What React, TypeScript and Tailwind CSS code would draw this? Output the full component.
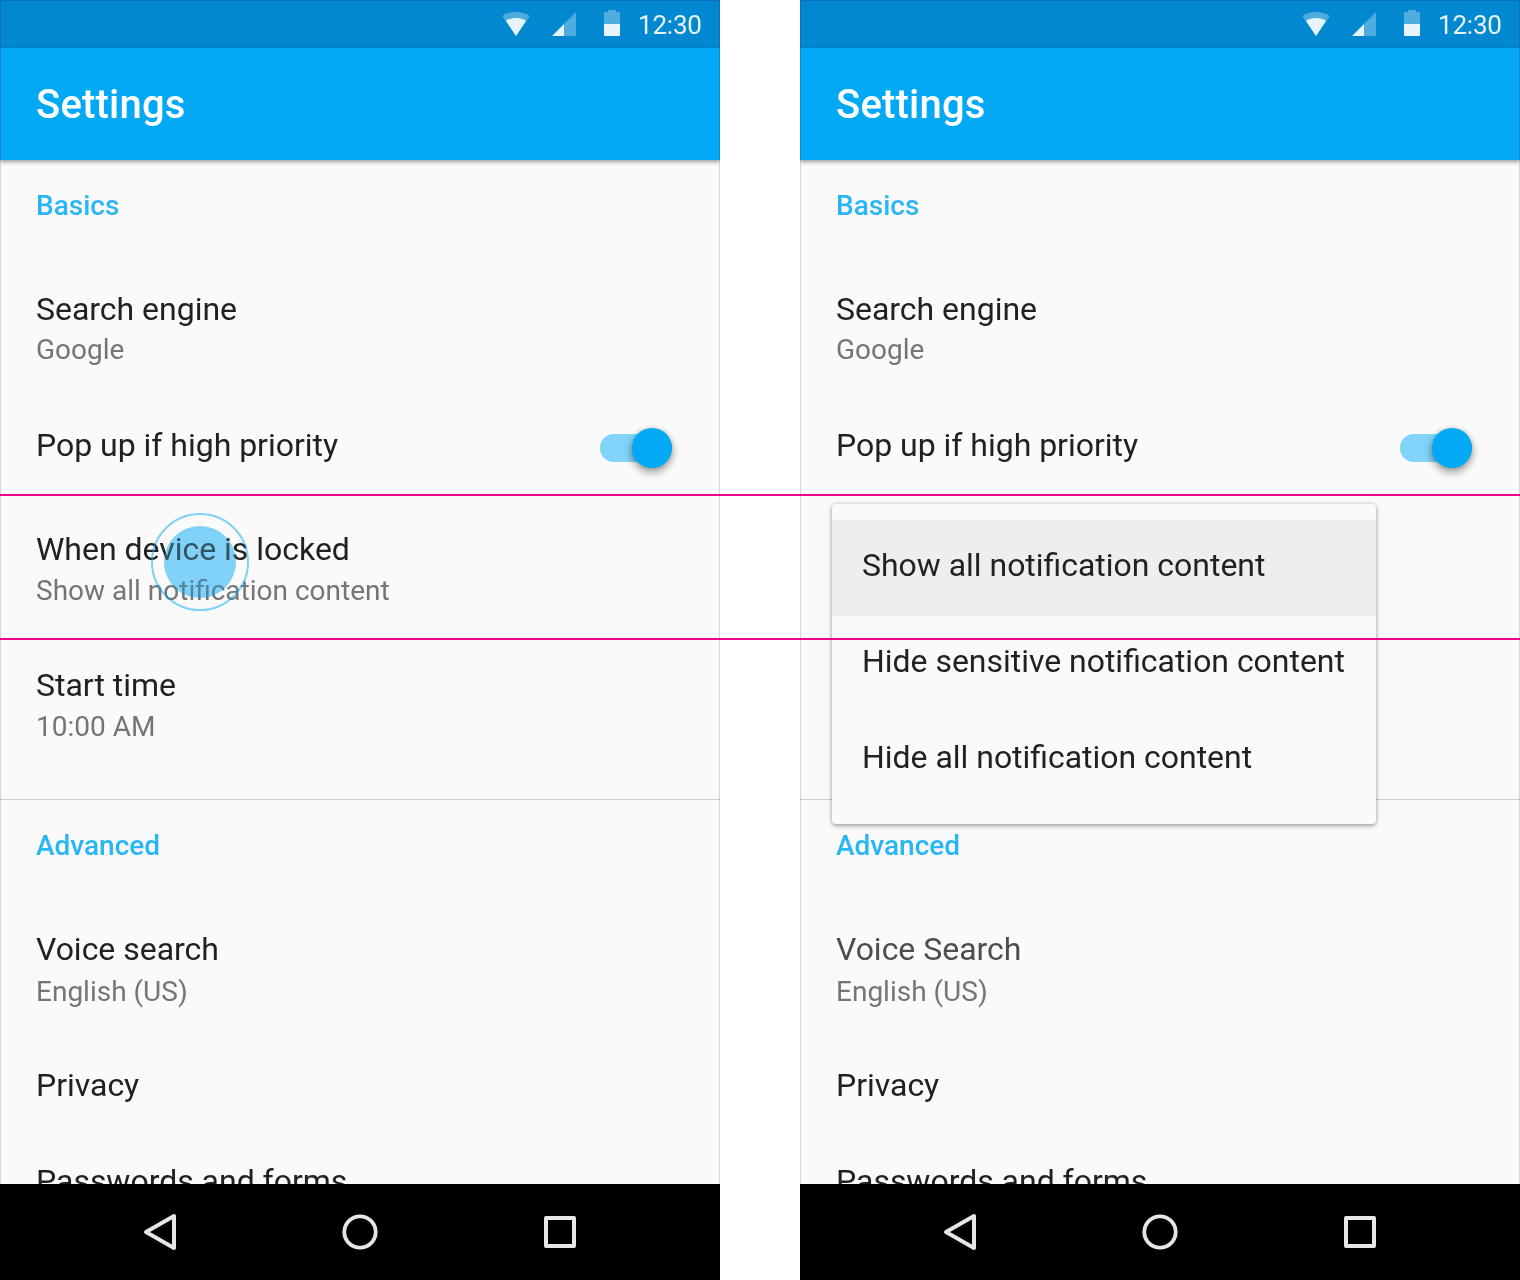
import type { ReactNode } from "react";

function StatusBar() {
  return (
    <div className="flex h-12 shrink-0 items-center bg-[#0288d1] pl-[502px]">
      <svg className="h-12 w-[118px] shrink-0" viewBox="502 0 118 48">
        <path d="M502.2 15.9C506 13.3 510.800 12 516 12s10 1.300 13.800 3.900L516 36z" fill="#fff" fillOpacity=".3" />
        <path d="M505.800 20.800C508.500 18.900 512 17.900 516 17.900s7.500 1 10.200 2.900L516 36z" fill="#fff" fillOpacity=".86" />
        <path d="M576 12v24h-12V24z" fill="#fff" fillOpacity=".3" />
        <path d="M564 24v12h-12z" fill="#fff" fillOpacity=".9" />
        <path d="M608 10h8v2h3q1 0 1 1v11h-16V13q0-1 1-1h3z" fill="#fff" fillOpacity=".3" />
        <path d="M604 24h16v11q0 1-1 1h-14q-1 0-1-1z" fill="#fff" fillOpacity=".9" />
      </svg>
      <span className="ml-[18px] mt-[2px] text-[26px] leading-8 tracking-[-0.2px] text-white/90">12:30</span>
    </div>
  );
}

function NavBar() {
  return (
    <div className="flex h-24 shrink-0 items-center justify-center gap-[152px] bg-black">
      <svg className="size-12" viewBox="0 0 48 48" fill="none" stroke="#e6e6e6" strokeWidth="4" strokeLinejoin="round">
        <path d="M38 8v32L10 24z" />
      </svg>
      <svg className="size-12" viewBox="0 0 48 48" fill="none" stroke="#e6e6e6" strokeWidth="3.8">
        <circle cx="24" cy="24" r="15.7" />
      </svg>
      <svg className="size-12" viewBox="0 0 48 48" fill="none" stroke="#e6e6e6" strokeWidth="4" strokeLinejoin="round">
        <path d="M10 10h28v28H10z" />
      </svg>
    </div>
  );
}

function SectionTitle({ children }: { children: ReactNode }) {
  return <h2 className="h-24 shrink-0 pt-[26px] text-[28px] font-medium leading-10 text-[#29b6f6]">{children}</h2>;
}

type RowProps = { title?: string; value?: string; className?: string; titleClass?: string; valueClass?: string };

function Row({ title, value, className = "", titleClass = "text-[#212121]", valueClass = "pt-[2px]" }: RowProps) {
  return (
    <div className={`shrink-0 ${className}`}>
      {title && <div className={`text-[32px] leading-10 tracking-[-0.02px] ${titleClass}`}>{title}</div>}
      {value && <div className={`text-[28px] leading-10 text-[#757575] ${valueClass}`}>{value}</div>}
    </div>
  );
}

function Switch() {
  return (
    <div className="mr-3 mt-[3px] flex h-10 w-[72px] items-center">
      <div className="flex h-7 w-full items-center justify-end rounded-full bg-[#80d3f9]">
        <div className="size-10 shrink-0 rounded-full bg-[#03a9f4] shadow-[0_4px_8px_rgba(0,0,0,0.4),0_0_4px_rgba(0,0,0,0.12)]" />
      </div>
    </div>
  );
}

type PhoneProps = { menuOpen?: boolean; voiceTitle: string; voiceClass?: string; children: ReactNode };

function Phone({ menuOpen = false, voiceTitle, voiceClass, children }: PhoneProps) {
  return (
    <div className="relative flex h-[1280px] w-[720px] shrink-0 flex-col overflow-hidden bg-[#fafafa]">
      <StatusBar />
      <div className="z-10 flex h-28 shrink-0 items-center bg-[#03a9f4] px-9 pt-[2px] shadow-[0_2px_4px_rgba(0,0,0,0.38)]">
        <h1 className="text-[40px] font-medium leading-[48px] tracking-[0.2px] text-white">Settings</h1>
      </div>
      <div className="flex min-h-0 flex-1 flex-col overflow-hidden">
        <div className="flex h-[640px] shrink-0 flex-col border-b border-[#cdcdcd] px-9">
          <SectionTitle>Basics</SectionTitle>
          <Row className="h-36 pt-[33px]" title="Search engine" value="Google" valueClass="pt-px" />
          <div className="flex h-24 shrink-0 items-start justify-between pt-[25px]">
            <Row title="Pop up if high priority" />
            <Switch />
          </div>
          {!menuOpen && (
            <>
              <Row className="h-36 pt-[33px]" title="When device is locked" value="Show all notification content" />
              <Row className="pt-[25px]" title="Start time" value="10:00 AM" />
            </>
          )}
        </div>
        <div className="flex flex-col px-9">
          <SectionTitle>Advanced</SectionTitle>
          <Row className="h-36 pt-[33px]" title={voiceTitle} titleClass={voiceClass} value="English (US)" valueClass="pt-[3px]" />
          <Row className="h-24 pt-[25px]" title="Privacy" />
          <Row className="h-24 pt-[25px]" title="Passwords and forms" />
        </div>
      </div>
      <NavBar />
      <div className="pointer-events-none absolute inset-0 z-20 border border-black/[0.14]" />
      {children}
    </div>
  );
}

function TouchPoint() {
  return (
    <div className="absolute left-[151px] top-[513px] grid size-[98px] place-items-center rounded-full border-2 border-[#03a9f4]/50">
      <div className="col-start-1 row-start-1 size-[72px] rounded-full bg-[#83d7fe] mix-blend-multiply" />
      <div className="relative col-start-1 row-start-1 size-[72px] rounded-full bg-[#80d3f9]/[0.31]" />
    </div>
  );
}

const options = ["Show all notification content", "Hide sensitive notification content", "Hide all notification content"];

function Menu() {
  return (
    <div className="absolute left-8 top-[504px] z-30 h-80 w-[544px] rounded bg-[#fafafa] py-4 shadow-[0_2px_4px_rgba(0,0,0,0.3),0_0_4px_rgba(0,0,0,0.16)]">
      {options.map((label, i) => (
        <div key={label} className={`h-24 whitespace-nowrap pl-[30px] pt-[25px] text-[31.95px] leading-10 text-[#212121] ${i === 0 ? "bg-[#eeeeee]" : ""}`}>
          {label}
        </div>
      ))}
    </div>
  );
}

export default function App() {
  return (
    <div className="relative flex h-[1280px] w-[1520px] gap-20 overflow-hidden bg-white font-[Roboto,sans-serif]">
      <Phone voiceTitle="Voice search">
        <TouchPoint />
      </Phone>
      <Phone menuOpen voiceTitle="Voice Search" voiceClass="text-[#4d4d4d]">
        <Menu />
      </Phone>
      <div className="pointer-events-none absolute inset-x-0 top-[494px] z-40 h-[146px] border-y-2 border-[#ec008c]" />
    </div>
  );
}
